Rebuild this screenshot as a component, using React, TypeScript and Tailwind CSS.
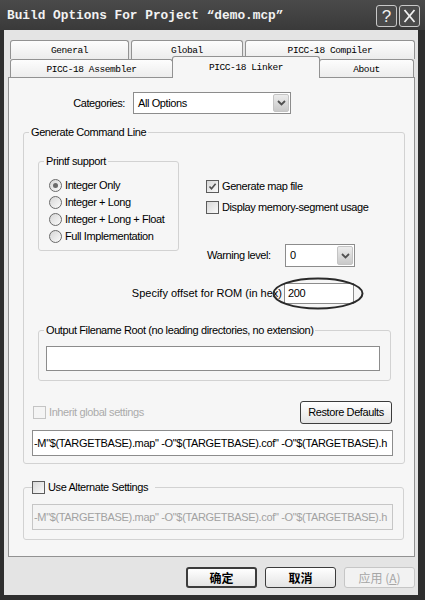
import React from "react";

const SANS = "font-['Liberation_Sans',Arial,sans-serif] text-[11px] tracking-[-0.4px] leading-[13px]";
const MONO = "font-['Liberation_Mono','Courier_New',monospace]";

function Checkbox({ checked = false, disabled = false }: { checked?: boolean; disabled?: boolean }) {
  return (
    <span
      className={
        "w-[13px] h-[13px] shrink-0 flex items-center justify-center border " +
        (disabled ? "border-[#c4c4c4] bg-[#f4f4f4]" : "border-[#5c5c5c] bg-linear-to-br from-[#d8d8d8] to-[#fafafa]")
      }
    >
      {checked && (
        <svg width="9" height="9" viewBox="0 0 9 9">
          <path d="M1.5 4.5 L3.5 6.8 L7.6 1.8" fill="none" stroke="#505050" strokeWidth="1.6" />
        </svg>
      )}
    </span>
  );
}

function Radio({ checked = false }: { checked?: boolean }) {
  return (
    <span className="w-[13px] h-[13px] shrink-0 rounded-full border border-[#6a6a6a] bg-linear-to-br from-[#d6d6d6] to-[#fbfbfb] flex items-center justify-center">
      {checked && <span className="w-[5px] h-[5px] rounded-full bg-[#6a6a6a]" />}
    </span>
  );
}

function Select({ value, width, height }: { value: string; width: string; height: string }) {
  return (
    <div className={`${width} ${height} border border-[#8c8c8c] bg-white flex items-center p-px`}>
      <span className="flex-1 pl-[3px] text-black">{value}</span>
      <span className="w-[16px] h-full rounded-[2px] border border-[#c4c4c4] bg-linear-to-b from-[#ececec] to-[#c9c9c9] flex items-center justify-center">
        <svg width="9" height="6" viewBox="0 0 9 6">
          <path d="M1 1 L4.5 4.5 L8 1" fill="none" stroke="#505050" strokeWidth="1.8" />
        </svg>
      </span>
    </div>
  );
}

function Tab({ label, w, selected = false, extra = "" }: { label: string; w: string; selected?: boolean; extra?: string }) {
  return (
    <div
      className={
        `${w} ${extra} flex items-center justify-center rounded-t-[3px] border-t border-x border-[#929292] text-[9.5px] text-black ${MONO} ` +
        (selected ? "h-[22px] -mt-[3px] bg-[#f6f6f6] relative z-10" : "h-[19px] bg-linear-to-b from-[#fdfdfd] to-[#ececec]")
      }
    >
      {label}
    </div>
  );
}

function XPButton({ children, def = false, disabled = false, w = "w-[71px] h-[21px]" }: { children: React.ReactNode; def?: boolean; disabled?: boolean; w?: string }) {
  return (
    <div
      className={
        `${w} rounded-[3px] flex items-center justify-center ` +
        (disabled
          ? "border border-[#c6c6c6] bg-[#f2f2f2] text-[#a6a6a6]"
          : def
          ? "border-2 border-[#3c3c3c] bg-linear-to-b from-[#ffffff] to-[#e4e4e4] text-black"
          : "border border-[#3c3c3c] bg-linear-to-b from-[#ffffff] to-[#e4e4e4] text-black")
      }
    >
      {children}
    </div>
  );
}

const CMD = '-M"$(TARGETBASE).map" -O"$(TARGETBASE).cof" -O"$(TARGETBASE).h';

export default function App() {
  return (
    <div className={`w-[425px] h-[600px] bg-[#2e2e2e] flex flex-col overflow-hidden ${SANS}`}>
      {/* Title bar */}
      <div className="h-[30px] shrink-0 bg-linear-to-b from-[#4a4a4a] to-[#3a3a3a] flex items-center pl-[7px] pr-[5px]">
        <span className={`${MONO} font-bold text-[12.8px] tracking-normal text-[#f2f2f2] flex-1 pt-px`}>
          Build Options For Project “demo.mcp”
        </span>
        <div className="flex gap-[2px] mt-[2px]">
          <div className="w-[21px] h-[22px] rounded-[3px] border border-[#c8c8c8] bg-[#4b4b4b] flex items-center justify-center text-[#f0f0f0] text-[17px] font-['Liberation_Sans',sans-serif] tracking-normal">
            ?
          </div>
          <div className="w-[21px] h-[22px] rounded-[3px] border border-[#c8c8c8] bg-[#4b4b4b] flex items-center justify-center">
            <svg width="13" height="14" viewBox="0 0 13 14">
              <path d="M1.5 1 L11.5 13 M11.5 1 L1.5 13" stroke="#f0f0f0" strokeWidth="1.8" fill="none" />
            </svg>
          </div>
        </div>
      </div>

      {/* Client */}
      <div className="h-[565px] shrink-0 ml-[4px] mr-[7px] bg-[#e4e4e4] flex flex-col">
        <div className="ml-[4px] w-[407px] flex flex-col">
          {/* Tabs */}
          <div className="pt-[10px] flex flex-col">
            <div className="flex pl-[2px] gap-[2px]">
              <Tab label="General" w="w-[119px]" />
              <Tab label="Global" w="w-[112px]" />
              <Tab label="PICC-18 Compiler" w="w-[170px]" />
            </div>
            <div className="flex pl-[2px] -mb-px items-end">
              <Tab label="PICC-18 Assembler" w="w-[163px]" />
              <Tab label="PICC-18 Linker" w="w-[148px]" selected extra="-ml-px" />
              <Tab label="About" w="w-[95px]" extra="-ml-px" />
            </div>
          </div>

          {/* Panel */}
          <div className="h-[480px] border border-[#929292] bg-[#f6f6f6] flex flex-col">
            {/* Categories */}
            <div className="mt-[14px] flex items-center">
              <span className="w-[116px] text-right text-black">Categories:</span>
              <div className="ml-[8px]">
                <Select value="All Options" width="w-[158px]" height="h-[22px]" />
              </div>
            </div>

            {/* Generate Command Line */}
            <fieldset className="mt-[12px] ml-[14px] w-[382px] border border-[#d2d2d2] rounded-[3px] flex flex-col">
              <legend className="ml-[5px] px-[2px] text-black leading-[13px]">Generate Command Line</legend>

              <div className="flex items-start">
                <fieldset className="mt-[16px] ml-[14px] w-[141px] h-[96px] border border-[#d2d2d2] rounded-[3px]">
                  <legend className="ml-[5px] px-[2px] text-black leading-[13px]">Printf support</legend>
                  <div className="pt-[9px] pl-[10px] flex flex-col">
                    {[
                      ["Integer Only", true],
                      ["Integer + Long", false],
                      ["Integer + Long + Float", false],
                      ["Full Implementation", false],
                    ].map(([l, c]) => (
                      <div key={l as string} className="h-[17px] flex items-center gap-[3px] text-black">
                        <Radio checked={c as boolean} />
                        <span>{l as string}</span>
                      </div>
                    ))}
                  </div>
                </fieldset>

                <div className="ml-[27px] mt-[41px] flex flex-col">
                  <div className="h-[13px] flex items-center gap-[3px] text-black">
                    <Checkbox checked />
                    <span>Generate map file</span>
                  </div>
                  <div className="mt-[8px] h-[13px] flex items-center gap-[3px] text-black">
                    <Checkbox />
                    <span>Display memory-segment usage</span>
                  </div>
                  <div className="mt-[30px] flex items-center">
                    <span className="w-[79px] pl-px text-black">Warning level:</span>
                    <Select value="0" width="w-[70px]" height="h-[23px]" />
                  </div>
                </div>
              </div>

              {/* Offset row */}
              <div className="mt-[16px] flex items-center">
                <span className="w-[258px] text-right text-black tracking-normal">Specify offset for ROM (in hex)</span>
                <div className="ml-[2px] relative">
                  <div className="w-[70px] h-[21px] border border-[#8c8c8c] bg-white flex items-center pl-[3px] text-black">200</div>
                  <svg className="absolute -left-[12px] -top-[6px] pointer-events-none" width="92" height="33" viewBox="0 0 92 33">
                    <ellipse cx="46" cy="16.5" rx="44.5" ry="15" fill="none" stroke="#2a2a2a" strokeWidth="2" />
                  </svg>
                </div>
              </div>

              {/* Output Filename Root */}
              <fieldset className="mt-[20px] ml-[14px] w-[353px] border border-[#d2d2d2] rounded-[3px] flex flex-col">
                <legend className="ml-[5px] px-[2px] text-black leading-[13px]">
                  Output Filename Root (no leading directories, no extension)
                </legend>
                <div className="mt-[9px] ml-[7px] mb-[9px] w-[334px] h-[25px] border border-[#8c8c8c] bg-white" />
              </fieldset>

              {/* Inherit + restore */}
              <div className="mt-[20px] flex items-center">
                <div className="ml-[9px] flex items-center gap-[3px] text-[#ababab]">
                  <Checkbox disabled />
                  <span>Inherit global settings</span>
                </div>
                <div className="ml-auto mr-[12px]">
                  <XPButton w="w-[92px] h-[23px]">Restore Defaults</XPButton>
                </div>
              </div>

              <div className="mt-[6px] ml-[8px] mb-[7px] w-[361px] h-[26px] border border-[#8c8c8c] bg-white flex items-center pl-px text-black">
                <span className="whitespace-nowrap tracking-[-0.34px]">{CMD}</span>
              </div>
            </fieldset>

            {/* Use Alternate Settings */}
            <fieldset className="mt-[17px] ml-[14px] w-[381px] border border-[#d2d2d2] rounded-[3px] flex flex-col">
              <legend className="ml-[8px] pr-[7px] flex items-center gap-[3px] text-black leading-[13px]">
                <Checkbox />
                <span>Use Alternate Settings</span>
              </legend>
              <div className="mt-[10px] ml-[8px] mb-[9px] w-[361px] h-[26px] border border-[#c6c6c6] bg-[#f4f4f4] flex items-center pl-px text-[#a2a2a2]">
                <span className="whitespace-nowrap tracking-[-0.34px]">{CMD}</span>
              </div>
            </fieldset>
          </div>

          {/* Buttons */}
          <div className="mt-[10px] flex justify-end gap-[8px] font-['Noto_Sans_CJK_SC',sans-serif] text-[12px] tracking-normal">
            <XPButton def>
              <span className="font-bold">确定</span>
            </XPButton>
            <XPButton>
              <span className="font-bold">取消</span>
            </XPButton>
            <XPButton disabled>
              <span>
                应用 (<span className="underline">A</span>)
              </span>
            </XPButton>
          </div>
        </div>
      </div>
    </div>
  );
}
